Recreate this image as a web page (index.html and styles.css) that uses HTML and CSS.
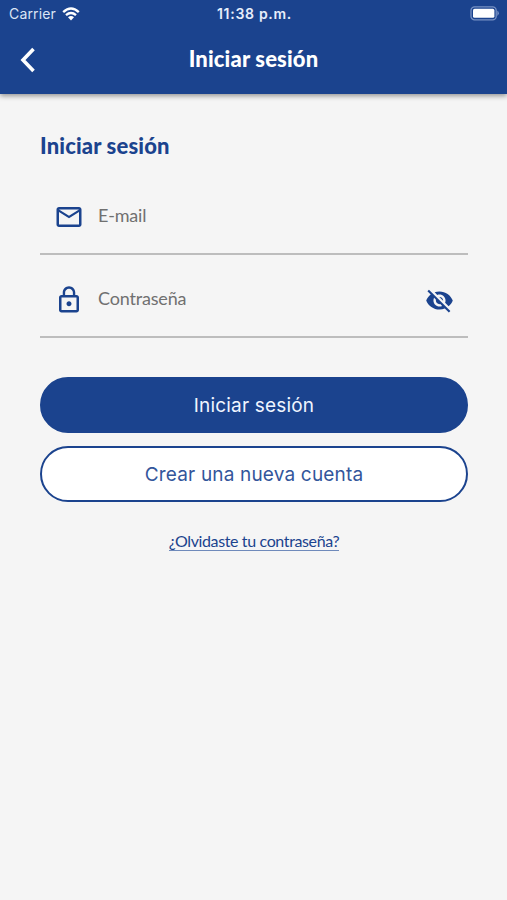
FILE: index.html
```html
<!DOCTYPE html>
<html lang="es">
<head>
<meta charset="utf-8">
<title>Iniciar sesión</title>
<link rel="stylesheet" href="styles.css">
</head>
<body>
<header class="header">
  <div class="status">
    <div class="carrier"><span>Carrier</span>
      <svg class="wifi" viewBox="0 0 18 14"><path d="M1.2 5.1Q9-2 16.8 5.1" /><path d="M4 8.1Q9 3.8 14 8.1"/><path class="solid" d="M6 10.3Q9 7.6 12 10.3L9 13.6Z"/></svg>
    </div>
    <time class="clock">11:38 p.m.</time>
    <svg class="battery" viewBox="0 0 30 15"><rect class="shell" x="1" y=".8" width="25.2" height="13" rx="3.6"/><rect class="charge" x="3" y="2.8" width="21.4" height="9" rx="1.6"/><path class="tip" d="M27.3 4.6q3.2 2.7 0 5.4z"/></svg>
  </div>
  <nav class="nav">
    <svg class="back" viewBox="0 0 16 26"><path d="M13.5 2L3 13l10.500 11"/></svg>
    <h1 class="nav-title">Iniciar sesión</h1>
  </nav>
</header>
<main class="content">
  <h2 class="heading">Iniciar sesión</h2>
  <div class="field">
    <svg class="icon" viewBox="0 0 24 24"><path d="M22 6c0-1.100-.9-2-2-2H4c-1.100 0-2 .9-2 2v12c0 1.100.9 2 2 2h16c1.100 0 2-.9 2-2V6zm-2 0l-8 5-8-5h16zm0 12H4V8l8 5 8-5v10z"/></svg>
    <span class="label">E-mail</span>
  </div>
  <div class="field">
    <svg class="icon" viewBox="0 0 24 24"><path d="M12 17c1.100 0 2-.9 2-2s-.9-2-2-2-2 .9-2 2 .9 2 2 2zm6-9h-1V6c0-2.760-2.240-5-5-5S7 3.240 7 6v2H6c-1.100 0-2 .9-2 2v10c0 1.100.9 2 2 2h12c1.100 0 2-.9 2-2V10c0-1.100-.9-2-2-2zM8.900 6c0-1.710 1.390-3.100 3.100-3.100s3.100 1.390 3.100 3.100v2H8.900V6zM18 20H6V10h12v10z"/></svg>
    <span class="label">Contraseña</span>
    <svg class="icon eye" viewBox="0 0 24 24"><path d="M12 7c2.760 0 5 2.240 5 5 0 .65-.13 1.260-.36 1.830l2.920 2.920c1.510-1.260 2.700-2.890 3.430-4.750-1.730-4.390-6-7.500-11-7.500-1.400 0-2.740.25-3.980.7l2.160 2.160C10.740 7.130 11.350 7 12 7zM2 4.270l2.280 2.280.46.46C3.080 8.300 1.780 10.020 1 12c1.730 4.390 6 7.500 11 7.500 1.550 0 3.030-.3 4.380-.84l.42.42L19.730 22 21 20.730 3.270 3 2 4.270zM7.530 9.800l1.550 1.550c-.05.21-.08.43-.08.65 0 1.660 1.340 3 3 3 .22 0 .44-.03.65-.08l1.550 1.550c-.67.33-1.410.53-2.200.53-2.760 0-5-2.240-5-5 0-.79.2-1.530.53-2.200zm4.310-.78l3.150 3.150.02-.16c0-1.660-1.340-3-3-3l-.17.01z"/></svg>
  </div>
  <div class="actions">
    <button class="button primary">Iniciar sesión</button>
    <button class="button secondary">Crear una nueva cuenta</button>
    <a class="forgot" href="#">¿Olvidaste tu contraseña?</a>
  </div>
</main>
</body>
</html>
```
FILE: styles.css
```css
* { box-sizing: border-box; }
body {
  margin: 0;
  min-height: 900px;
  background: #f5f5f5;
  color: #1b438e;
  font-family: "Gill Sans", Lato, sans-serif;
}
.header {
  height: 94px;
  background: #1b438e;
  color: #fff;
  box-shadow: 0 2px 5px rgba(0, 0, 0, .4);
}
.status {
  display: grid;
  grid-template-columns: 1fr auto 1fr;
  align-items: center;
  height: 27px;
  padding: 0 7px 0 9px;
  font-family: Inter, sans-serif;
}
.carrier { display: flex; align-items: center; gap: 6px; font-size: 14px; letter-spacing: .15px; color: #dce5f5; }
.wifi { width: 18px; height: 14px; fill: none; stroke: #fff; stroke-width: 2.400; }
.wifi .solid { fill: #fff; stroke: none; }
.clock { font-size: 14px; font-weight: 600; letter-spacing: .7px; color: #e6edfa; }
.battery { width: 30px; height: 15px; justify-self: end; }
.shell { fill: none; stroke: #7892c4; stroke-width: 1.300; }
.charge { fill: #fff; }
.tip { fill: #7892c4; }
.nav {
  display: grid;
  grid-template-columns: 16px 1fr 16px;
  align-items: center;
  height: 65px;
  padding: 0 20px;
}
.back { width: 16px; height: 26px; fill: none; stroke: #fff; stroke-width: 3.600; }
.nav-title { margin: -2px 0 0; text-align: center; font-size: 22px; font-weight: 900; line-height: 26px; letter-spacing: .15px; }
.content { padding: 39px 39px 0 40px; }
.heading { margin: 0; font-size: 22px; font-weight: 900; line-height: 26px; letter-spacing: .15px; }
.field {
  display: flex;
  align-items: center;
  height: 83px;
  padding: 9px 14px 0;
  border-bottom: 2px solid #bdbdbd;
}
.heading + .field { margin-top: 13px; }
.icon { flex: none; width: 30px; height: 30px; fill: #1b438e; }
.label { margin: -4px 0 0 14px; color: #707070; font-size: 18px; line-height: 24px; letter-spacing: -.18px; }
.eye { width: 29px; height: 29px; margin-left: auto; }
.actions { display: flex; flex-direction: column; align-items: center; padding-top: 39px; }
.button {
  width: 100%;
  height: 56px;
  padding: 0;
  border: 2px solid #1b438e;
  border-radius: 28px;
  font-family: Inter, sans-serif;
  font-size: 19px;
  font-weight: 400;
  letter-spacing: .17px;
}
.primary { background: #1b438e; color: #f0f5ff; }
.secondary { margin-top: 13px; background: #fff; color: #33569b; }
.forgot {
  margin-top: 29px;
  border-bottom: 1px solid #6f8abb;
  color: #1b438e;
  font-size: 16px;
  line-height: 19px;
  letter-spacing: -.37px;
  text-decoration: none;
  white-space: nowrap;
}
```
